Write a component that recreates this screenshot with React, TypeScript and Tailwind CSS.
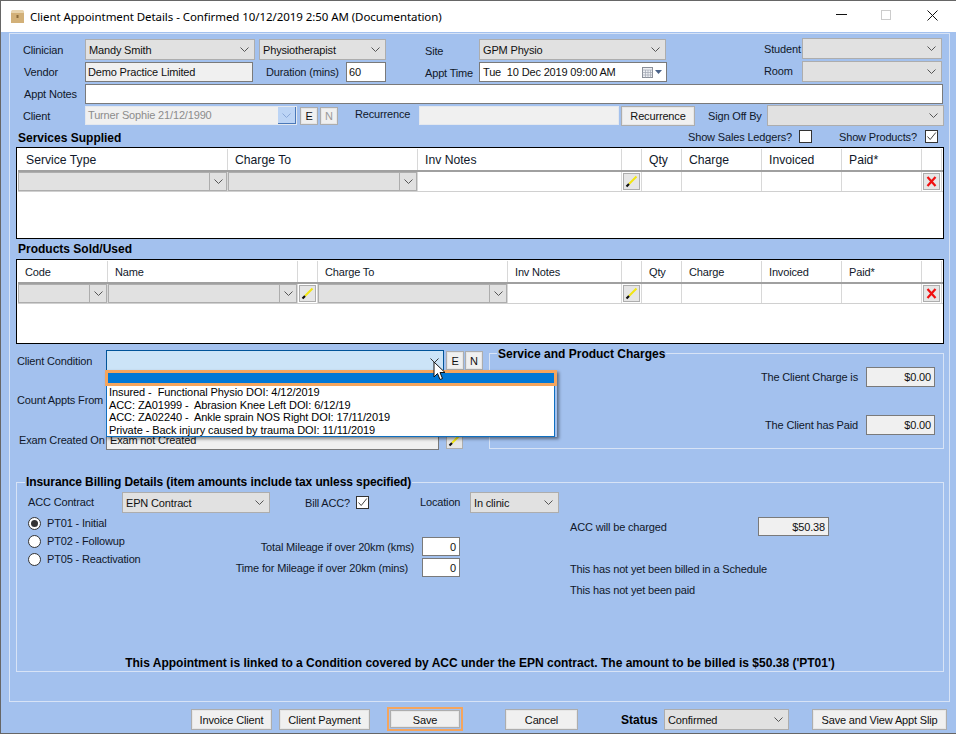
import React from "react";

const Chevron = ({ color = "#555" }: { color?: string }) => (
  <svg width="9" height="5" viewBox="0 0 9 5" className="shrink-0">
    <path d="M0.5 0.5 L4.5 4.5 L8.5 0.5" fill="none" stroke={color} strokeWidth="1" />
  </svg>
);

const Sel = ({ w, text = "", h = "h-[21px]", cn = "" }: { w: string; text?: string; h?: string; cn?: string }) => (
  <div className={`${w} ${h} ${cn} shrink-0 flex items-center justify-between bg-[#e1e1e1] border border-[#adadad] pl-[3px] pr-[5px]`}>
    <span className="whitespace-nowrap">{text}</span>
    <Chevron />
  </div>
);

const Box = ({ w, text = "", h = "h-[20px]", cn = "" }: { w: string; text?: string; h?: string; cn?: string }) => (
  <div className={`${w} ${h} ${cn} shrink-0 flex items-center border border-[#7a7a7a] whitespace-nowrap`}>{text}</div>
);

const Lbl = ({ w, text, cn = "" }: { w: string; text: string; cn?: string }) => (
  <div className={`${w} ${cn} shrink-0 whitespace-nowrap text-[#10182a]`}>{text}</div>
);

const Btn = ({ w, text, h = "h-[21px]", cn = "" }: { w: string; text: string; h?: string; cn?: string }) => (
  <div className={`${w} ${h} ${cn} shrink-0 flex items-center justify-center bg-[#f0f0f0] border border-[#adadad] shadow-[inset_0_0_0_1px_#e6e6e6] whitespace-nowrap`}>{text}</div>
);

const Check = ({ on = false }: { on?: boolean }) => (
  <div className="w-[13px] h-[13px] shrink-0 bg-white border border-[#333] flex items-center justify-center">
    {on && (
      <svg width="11" height="11" viewBox="0 0 11 11">
        <path d="M1.5 5.5 L4.2 8.5 L9.8 1.5" fill="none" stroke="#444" strokeWidth="1" />
      </svg>
    )}
  </div>
);

const Radio = ({ on = false, text }: { on?: boolean; text: string }) => (
  <div className="h-[18px] flex items-center">
    <div className="w-[13px] h-[13px] shrink-0 rounded-full bg-white border border-[#333] flex items-center justify-center">
      {on && <div className="w-[7px] h-[7px] rounded-full bg-[#333]" />}
    </div>
    <span className="ml-[6px] whitespace-nowrap text-[#10182a]">{text}</span>
  </div>
);

const Pencil = ({ cn = "" }: { cn?: string }) => (
  <div className={`${cn} w-[17px] h-[17px] shrink-0 flex items-center justify-center bg-[#e6e6e6] border border-[#adadad]`}>
    <svg width="13" height="13" viewBox="0 0 13 13">
      <path d="M11.5 1.5 L4 9" stroke="#f2e611" strokeWidth="2" />
      <path d="M4 9 L1.5 11.5" stroke="#111" strokeWidth="2.2" />
    </svg>
  </div>
);

const RedX = () => (
  <div className="w-[17px] h-[17px] shrink-0 flex items-center justify-center bg-[#e6e6e6] border border-[#adadad]">
    <svg width="11" height="11" viewBox="0 0 11 11">
      <path d="M1.5 1 L9.5 10 M9.5 1 L1.5 10" stroke="#f01010" strokeWidth="2.2" />
    </svg>
  </div>
);

type Col = { w: string; label?: string; pad: string; kind: "combo" | "text" | "pencil" | "x" };

const Table = ({ cols, h, small = false }: { cols: Col[]; h: string; small?: boolean }) => (
  <div className={`${h} ml-[6px] w-[928px] shrink-0 bg-white border border-black pl-px pt-px`}>
    <div className="flex h-[23px] border-b-2 border-[#a0a0a0]">
      {cols.map((c, i) => (
        <div
          key={i}
          className={`${c.w} ${c.pad} ${small ? "" : "text-[12.2px] tracking-normal"} shrink-0 flex items-center border-r border-[#d8d8d8] whitespace-nowrap text-[#10182a]`}
        >
          {c.label}
        </div>
      ))}
    </div>
    <div className="flex h-[20px] border-b border-[#d0d0d0]">
      {cols.map((c, i) => (
        <div key={i} className={`${c.w} shrink-0 flex items-center justify-center border-r border-[#d8d8d8]`}>
          {c.kind === "combo" && (
            <div className="w-full h-full flex justify-end bg-[#e1e1e1] border border-[#adadad]">
              <div className="w-[17px] flex items-center justify-center border-l border-[#adadad]">
                <Chevron />
              </div>
            </div>
          )}
          {c.kind === "pencil" && <Pencil />}
          {c.kind === "x" && <RedX />}
        </div>
      ))}
    </div>
  </div>
);

const serviceCols: Col[] = [
  { w: "w-[210px]", label: "Service Type", pad: "pl-[8px]", kind: "combo" },
  { w: "w-[190px]", label: "Charge To", pad: "pl-[7px]", kind: "combo" },
  { w: "w-[204px]", label: "Inv Notes", pad: "pl-[7px]", kind: "text" },
  { w: "w-[20px]", pad: "", kind: "pencil" },
  { w: "w-[40px]", label: "Qty", pad: "pl-[7px]", kind: "text" },
  { w: "w-[80px]", label: "Charge", pad: "pl-[7px]", kind: "text" },
  { w: "w-[80px]", label: "Invoiced", pad: "pl-[7px]", kind: "text" },
  { w: "w-[80px]", label: "Paid*", pad: "pl-[7px]", kind: "text" },
  { w: "w-[20px]", pad: "", kind: "x" },
];

const productCols: Col[] = [
  { w: "w-[90px]", label: "Code", pad: "pl-[7px]", kind: "combo" },
  { w: "w-[190px]", label: "Name", pad: "pl-[7px]", kind: "combo" },
  { w: "w-[20px]", pad: "", kind: "pencil" },
  { w: "w-[190px]", label: "Charge To", pad: "pl-[7px]", kind: "combo" },
  { w: "w-[114px]", label: "Inv Notes", pad: "pl-[7px]", kind: "text" },
  { w: "w-[20px]", pad: "", kind: "pencil" },
  { w: "w-[40px]", label: "Qty", pad: "pl-[7px]", kind: "text" },
  { w: "w-[80px]", label: "Charge", pad: "pl-[7px]", kind: "text" },
  { w: "w-[80px]", label: "Invoiced", pad: "pl-[7px]", kind: "text" },
  { w: "w-[80px]", label: "Paid*", pad: "pl-[7px]", kind: "text" },
  { w: "w-[20px]", pad: "", kind: "x" },
];

const conditions = [
  "Insured -  Functional Physio DOI: 4/12/2019",
  "ACC: ZA01999 -  Abrasion Knee Left DOI: 6/12/19",
  "ACC: ZA02240 -  Ankle sprain NOS Right DOI: 17/11/2019",
  "Private - Back injury caused by trauma DOI: 11/11/2019",
];

export default function App() {
  return (
    <div className="w-[956px] h-[734px] overflow-hidden flex flex-col bg-[#a3c1ee] border-t border-l border-b border-[#666] font-['Liberation_Sans',sans-serif] text-[11px] tracking-[-0.16px] leading-[14px] text-[#111]">
      {/* Title bar */}
      <div className="h-[31px] shrink-0 bg-white flex items-center">
        <svg width="13" height="14" viewBox="0 0 13 14" className="ml-[10px] -mt-[1px] shrink-0">
          <path d="M1 1 L12 1 L13 4 L13 14 L0 14 L0 4 Z" fill="#d2b078" />
          <path d="M1 1 L12 1 L13 4 L0 4 Z" fill="#e8d4ae" />
          <rect x="5.5" y="6" width="2" height="3" fill="#8a6a3a" />
        </svg>
        <span className="ml-[6px] font-['Noto_Sans',sans-serif] text-[11.5px] tracking-[-0.07px] whitespace-nowrap text-black">
          Client Appointment Details - Confirmed 10/12/2019 2:50 AM (Documentation)
        </span>
        <svg width="11" height="2" viewBox="0 0 11 2" className="ml-auto -mt-[3px] shrink-0">
          <rect width="11" height="1" fill="#111" />
        </svg>
        <svg width="10" height="10" viewBox="0 0 10 10" className="ml-[34px] -mt-[3px] shrink-0">
          <rect x="0.5" y="0.5" width="9" height="9" fill="none" stroke="#ccc" />
        </svg>
        <svg width="11" height="11" viewBox="0 0 11 11" className="ml-[36px] mr-[18px] -mt-[3px] shrink-0">
          <path d="M0.5 0.5 L10.5 10.5 M10.5 0.5 L0.5 10.5" stroke="#111" strokeWidth="1" />
        </svg>
      </div>

      {/* Main panel */}
      <div className="mt-px ml-[8px] w-[941px] h-[669px] shrink-0 border border-[#d7e3f6] flex flex-col">
        {/* Row 1 */}
        <div className="mt-[4px] h-[22px] flex items-end shrink-0">
          <Lbl w="ml-[13px] w-[62px] h-[21px] leading-[22px]" text="Clinician" />
          <Sel w="w-[170px]" text="Mandy Smith" />
          <Sel w="ml-[4px] w-[127px]" text="Physiotherapist" />
          <Lbl w="ml-[39px] w-[54px] h-[21px] leading-[25px]" text="Site" />
          <Sel w="w-[187px]" text="GPM Physio" />
          <Lbl w="ml-[98px] w-[38px] self-start h-[21px] leading-[23px]" text="Student" />
          <Sel w="w-[140px]" cn="self-start" />
        </div>
        {/* Row 2 */}
        <div className="mt-px h-[22px] flex items-start shrink-0">
          <Lbl w="ml-[14px] w-[61px] mt-px h-[20px] leading-[20px]" text="Vendor" />
          <Box w="w-[168px]" cn="mt-px bg-[#f0f0f0] pl-[2px]" text="Demo Practice Limited" />
          <Lbl w="ml-[13px] w-[80px] mt-px h-[20px] leading-[20px]" text="Duration (mins)" />
          <Box w="w-[40px]" cn="mt-px bg-white pl-[2px]" text="60" />
          <Lbl w="ml-[39px] w-[54px] mt-px h-[20px] leading-[22px]" text="Appt Time" />
          <div className="mt-px w-[188px] h-[20px] shrink-0 flex items-center bg-white border border-[#7a7a7a] pl-[3px] whitespace-nowrap">
            <span>Tue&nbsp;&nbsp;10 Dec 2019 09:00 AM</span>
            <svg width="11" height="11" viewBox="0 0 11 11" className="ml-auto shrink-0">
              <rect x="0.5" y="0.5" width="10" height="10" fill="#eef0f4" stroke="#8a8f99" />
              <path d="M0.5 3 H10.5 M0.5 5.5 H10.5 M0.5 8 H10.5 M3.5 3 V10.5 M6 3 V10.5 M8.5 3 V10.5" stroke="#a0a6b2" strokeWidth="0.7" />
            </svg>
            <svg width="7" height="4" viewBox="0 0 7 4" className="ml-[2px] mr-[4px] shrink-0">
              <path d="M0 0 H7 L3.5 4 Z" fill="#4a6288" />
            </svg>
          </div>
          <Lbl w="ml-[97px] w-[38px] h-[21px] leading-[21px]" text="Room" />
          <Sel w="w-[140px]" />
        </div>
        {/* Row 3 */}
        <div className="mt-px h-[20px] flex items-center shrink-0">
          <Lbl w="ml-[14px] w-[61px]" text="Appt Notes" />
          <Box w="w-[858px]" cn="bg-white" />
        </div>
        {/* Row 4 */}
        <div className="mt-px h-[21px] flex items-center shrink-0">
          <Lbl w="ml-[13px] w-[62px]" text="Client" />
          <div className="w-[212px] h-[19px] shrink-0 flex bg-[#f0f0f0] border border-[#e4e8ee]">
            <span className="flex-1 pl-[2px] leading-[17px] text-[#8c8c8c] whitespace-nowrap">Turner Sophie 21/12/1990</span>
            <div className="w-[18px] flex items-center justify-center bg-[#bcd4f5] border-r border-b border-[#4a78b8]">
              <Chevron color="#8aa8d8" />
            </div>
          </div>
          <Btn w="ml-[3px] w-[18px]" h="h-[18px]" text="E" />
          <Btn w="ml-[2px] w-[18px]" h="h-[18px]" text="N" cn="text-[#9a9a9a]" />
          <Lbl w="ml-[17px] w-[64px] -mt-[3px]" text="Recurrence" />
          <div className="w-[200px] h-[19px] shrink-0 bg-[#f0f0f0] border border-[#e4e8ee]" />
          <Btn w="ml-[2px] w-[74px]" h="h-[20px]" text="Recurrence" />
          <Lbl w="ml-[13px] w-[59px]" text="Sign Off By" />
          <Sel w="w-[177px]" />
        </div>
        {/* Services header */}
        <div className="h-[21px] flex items-center shrink-0">
          <div className="ml-[8px] mt-[2px] w-[670px] shrink-0 font-bold text-[12px] tracking-normal text-black">Services Supplied</div>
          <Lbl w="w-[111px]" text="Show Sales Ledgers?" />
          <Check />
          <Lbl w="ml-[27px] w-[86px]" text="Show Products?" />
          <Check on />
        </div>
        <Table cols={serviceCols} h="h-[92px]" />
        <div className="h-[20px] flex items-center shrink-0">
          <div className="ml-[8px] font-bold text-[12px] tracking-normal text-black">Products Sold/Used</div>
        </div>
        <Table cols={productCols} h="h-[85px]" small />

        {/* Condition + charges */}
        <div className="h-[138px] flex shrink-0">
          <div className="w-[479px] shrink-0 flex flex-col">
            <div className="relative mt-[6px] h-[21px] flex items-center shrink-0">
              <Lbl w="ml-[7px] w-[89px]" text="Client Condition" />
              <div className="w-[338px] h-[21px] shrink-0 flex items-center justify-end bg-[#cce4f7] border border-[#005499] pr-[4px]">
                <Chevron color="#333" />
              </div>
              <Btn w="ml-[2px] w-[18px]" h="h-[19px]" text="E" />
              <Btn w="ml-px w-[18px]" h="h-[19px]" text="N" />
              {/* Open dropdown */}
              <div className="absolute left-[95px] top-[20px] w-[452px] z-10 shadow-[2px_2px_3px_rgba(0,0,0,0.45)]">
                <div className="h-[16px] border-[3px] border-[#f4a55e] bg-[#0078d7]" />
                <div className="ml-px mr-[2px] h-[51px] bg-white border-x border-b border-[#0f6fc0] pl-[2px] text-[11px] tracking-[-0.08px] leading-[12.6px] text-black">
                  {conditions.map((c) => (
                    <div key={c} className="whitespace-pre">{c}</div>
                  ))}
                </div>
              </div>
              <svg width="13" height="21" viewBox="0 0 13 21" className="absolute left-[423px] top-[11px] z-20">
                <path d="M1 1 L1 16 L4.5 12.5 L7 18.5 L9.5 17.5 L7 11.5 L12 11.5 Z" fill="#fff" stroke="#111" strokeWidth="1" />
              </svg>
            </div>
            <div className="mt-[22px] h-[14px] shrink-0">
              <Lbl w="ml-[7px] w-[89px]" text="Count Appts From" />
            </div>
            <div className="mt-[23px] h-[20px] flex items-center shrink-0">
              <Lbl w="ml-[9px] w-[87px]" text="Exam Created On" />
              <Box w="w-[333px]" cn="bg-[#f0f0f0] pl-[3px]" text="Exam not Created" />
              <Pencil cn="ml-[7px]" />
            </div>
          </div>
          <div className="mt-[9px] w-[455px] h-[96px] shrink-0 border border-[#d7e3f6] flex flex-col">
            <div className="-mt-[7px] ml-[7px] h-[14px] w-fit px-px bg-[#a3c1ee] font-bold text-[12px] tracking-normal text-black whitespace-nowrap">
              Service and Product Charges
            </div>
            <div className="mt-[6px] flex items-center justify-end pr-[8px]">
              <Lbl w="mr-[8px]" text="The Client Charge is" />
              <Box w="w-[69px]" cn="bg-[#f0f0f0] justify-end pr-[3px]" text="$0.00" />
            </div>
            <div className="mt-[28px] flex items-center justify-end pr-[8px]">
              <Lbl w="mr-[8px]" text="The Client has Paid" />
              <Box w="w-[69px]" cn="bg-[#f0f0f0] justify-end pr-[3px]" text="$0.00" />
            </div>
          </div>
        </div>

        {/* Insurance */}
        <div className="ml-[6px] w-[928px] h-[190px] shrink-0 border border-[#d7e3f6] flex flex-col">
          <div className="-mt-[8px] ml-[8px] h-[14px] w-fit px-px bg-[#a3c1ee] font-bold text-[12px] tracking-[-0.09px] text-black whitespace-nowrap">
            Insurance Billing Details (item amounts include tax unless specified)
          </div>
          <div className="mt-[3px] h-[21px] flex items-center shrink-0">
            <Lbl w="ml-[11px] w-[94px] -mt-[2px]" text="ACC Contract" />
            <Sel w="w-[148px]" text="EPN Contract" />
            <Lbl w="ml-[35px] w-[51px]" text="Bill ACC?" />
            <Check on />
            <Lbl w="ml-[51px] w-[50px] -mt-[2px]" text="Location" />
            <Sel w="w-[89px]" text="In clinic" />
          </div>
          <div className="flex shrink-0">
            <div className="ml-[11px] w-[200px] mt-px shrink-0 flex flex-col">
              <Radio on text="PT01 - Initial" />
              <Radio text="PT02 - Followup" />
              <Radio text="PT05 - Reactivation" />
            </div>
            <div className="w-[232px] mt-[24px] shrink-0 flex flex-col items-end">
              <div className="flex items-center h-[19px]">
                <Lbl w="mr-[8px]" text="Total Mileage if over 20km (kms)" />
                <Box w="w-[38px]" h="h-[19px]" cn="bg-white justify-end pr-[3px]" text="0" />
              </div>
              <div className="mt-[2px] flex items-center h-[19px]">
                <Lbl w="mr-[14px]" text="Time for Mileage if over 20km (mins)" />
                <Box w="w-[38px]" h="h-[19px]" cn="bg-white justify-end pr-[3px]" text="0" />
              </div>
            </div>
            <div className="ml-[110px] mt-[4px] shrink-0 flex flex-col">
              <div className="flex items-center h-[19px]">
                <Lbl w="w-[188px]" text="ACC will be charged" />
                <Box w="w-[71px]" h="h-[19px]" cn="bg-[#f0f0f0] justify-end pr-[3px]" text="$50.38" />
              </div>
              <Lbl w="mt-[26px]" text="This has not yet been billed in a Schedule" />
              <Lbl w="mt-[7px]" text="This has not yet been paid" />
            </div>
          </div>
          <div className="mt-auto mb-[1px] text-center font-bold text-[12px] tracking-normal text-black whitespace-nowrap">
            This Appointment is linked to a Condition covered by ACC under the EPN contract. The amount to be billed is $50.38 ('PT01')
          </div>
        </div>
      </div>

      {/* Bottom buttons */}
      <div className="mt-[5px] h-[24px] flex items-center shrink-0">
        <Btn w="ml-[190px] w-[81px]" cn="pt-px" text="Invoice Client" />
        <Btn w="ml-[7px] w-[91px]" cn="pt-px" text="Client Payment" />
        <div className="ml-[17px] w-[76px] h-[24px] shrink-0 border-2 border-[#f4a55e] flex items-center justify-center p-px">
          <Btn w="w-full" h="h-full" cn="pt-px" text="Save" />
        </div>
        <Btn w="ml-[42px] w-[73px]" cn="pt-px" text="Cancel" />
        <div className="ml-[43px] mt-px w-[43px] shrink-0 font-bold text-[12px] tracking-normal text-black">Status</div>
        <Sel w="w-[125px]" cn="pt-px" text="Confirmed" />
        <Btn w="ml-[23px] w-[135px]" cn="pt-px" text="Save and View Appt Slip" />
      </div>
    </div>
  );
}
